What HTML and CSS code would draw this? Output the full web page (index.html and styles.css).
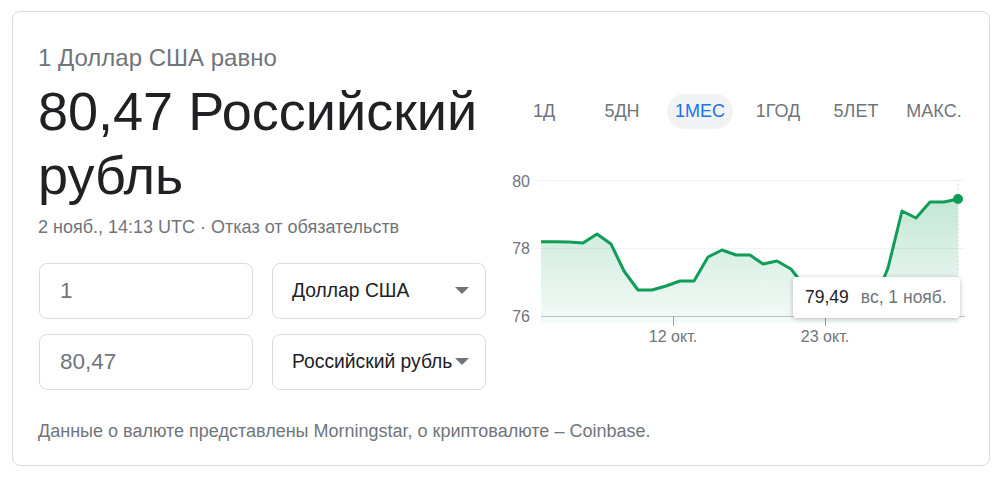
FILE: index.html
```html
<!DOCTYPE html>
<html lang="ru">
<head>
<meta charset="utf-8">
<link rel="stylesheet" href="styles.css">
</head>
<body>
<div class="card">
  <div class="left">
    <div class="eq">1 Доллар США равно</div>
    <div class="big">80,47 Российский<br>рубль</div>
    <div class="date">2 нояб., 14:13 UTC · <span>Отказ от обязательств</span></div>
    <div class="form">
      <div class="field num">1</div>
      <div class="field sel"><span>Доллар США</span><i class="arrow"></i></div>
      <div class="field num">80,47</div>
      <div class="field sel"><span>Российский рубль</span><i class="arrow"></i></div>
    </div>
    <div class="src">Данные о валюте представлены Morningstar, о криптовалюте – Coinbase.</div>
  </div>
  <div class="right">
    <div class="tabs">
      <div class="tab"><span>1Д</span></div>
      <div class="tab"><span>5ДН</span></div>
      <div class="tab"><span class="active">1МЕС</span></div>
      <div class="tab"><span>1ГОД</span></div>
      <div class="tab"><span>5ЛЕТ</span></div>
      <div class="tab"><span>МАКС.</span></div>
    </div>
    <div class="chart">
      <svg width="484" height="185" viewBox="505 165 484 185" xmlns="http://www.w3.org/2000/svg">
        <defs>
          <linearGradient id="g" x1="0" y1="180" x2="0" y2="323" gradientUnits="userSpaceOnUse">
            <stop offset="0" stop-color="#0f9d58" stop-opacity="0.28"/>
            <stop offset="1" stop-color="#0f9d58" stop-opacity="0.04"/>
          </linearGradient>
        </defs>
        <line x1="535" y1="180.5" x2="965" y2="180.5" stroke="#f1f3f4" stroke-width="1"/>
        <line x1="535" y1="248.5" x2="965" y2="248.5" stroke="#f1f3f4" stroke-width="1"/>
        <polygon fill="url(#g)" points="541,241.7 555,241.7 569,242 583,243 597,234 611,244 624,271 638,290 652,290 666,286 680,281 694,281 708,257 722,250 736,255 750,255 763,264 777,261 791,269 805,287 819,294 833,296 847,298 861,300 875,300 888,268 902,211 916,218 930,202 944,202 958,199 958,323 541,323"/>
        <line x1="958" y1="180" x2="958" y2="316" stroke="#dadce0" stroke-width="1" stroke-dasharray="2,2"/>
        <line x1="541" y1="316.5" x2="965" y2="316.5" stroke="#bdc1c6" stroke-width="1"/>
        <line x1="673.5" y1="316" x2="673.5" y2="326" stroke="#9aa0a6" stroke-width="1"/>
        <line x1="825.5" y1="316" x2="825.5" y2="326" stroke="#9aa0a6" stroke-width="1"/>
        <polyline fill="none" stroke="#0f9d58" stroke-width="3" stroke-linejoin="round" points="541,241.7 555,241.7 569,242 583,243 597,234 611,244 624,271 638,290 652,290 666,286 680,281 694,281 708,257 722,250 736,255 750,255 763,264 777,261 791,269 805,287 819,294 833,296 847,298 861,300 875,300 888,268 902,211 916,218 930,202 944,202 958,199"/>
        <circle cx="958" cy="199" r="5" fill="#0f9d58"/>
        <g class="ax">
          <text x="530" y="187" text-anchor="end">80</text>
          <text x="530" y="254" text-anchor="end">78</text>
          <text x="530" y="322" text-anchor="end">76</text>
          <text x="673" y="342" text-anchor="middle">12 окт.</text>
          <text x="825" y="342" text-anchor="middle">23 окт.</text>
        </g>
      </svg>
      <div class="tip"><b>79,49</b><span>вс, 1 нояб.</span></div>
    </div>
  </div>
</div>
</body>
</html>
```
FILE: styles.css
```css
* { box-sizing: border-box; }
body {
  margin: 0;
  background: #fff;
  font-family: "Liberation Sans", Arial, sans-serif;
  color: #202124;
}
.card {
  margin: 11px 12px;
  width: 978px;
  height: 455px;
  border: 1px solid #dadce0;
  border-radius: 8px;
  display: flex;
}
.left {
  width: 492px;
  padding: 32px 0 0 25px;
  display: flex;
  flex-direction: column;
}
.eq {
  font-size: 24px;
  line-height: 28px;
  color: #70757a;
}
.big {
  margin-top: 7px;
  font-size: 54px;
  line-height: 64px;
  color: #202124;
}
.date {
  margin-top: 8.5px;
  font-size: 18px;
  line-height: 22px;
  color: #70757a;
}
.form {
  margin-top: 25px;
  margin-left: 1px;
  display: grid;
  grid-template-columns: 214px 214px;
  grid-auto-rows: 56px;
  column-gap: 19px;
  row-gap: 15px;
}
.field {
  border: 1px solid #dadce0;
  border-radius: 8px;
  display: flex;
  align-items: center;
}
.num {
  padding-left: 20px;
  font-size: 22.5px;
  color: #70757a;
}
.sel {
  padding: 0 16px 0 19px;
  font-size: 19.3px;
  color: #202124;
  justify-content: space-between;
  white-space: nowrap;
}
.arrow {
  width: 0;
  height: 0;
  border-left: 7px solid transparent;
  border-right: 7px solid transparent;
  border-top: 7px solid #70757a;
  flex: none;
}
.src {
  margin-top: 30px;
  font-size: 18px;
  line-height: 22px;
  color: #70757a;
  white-space: nowrap;
}
.right {
  width: 484px;
  padding-top: 82px;
  display: flex;
  flex-direction: column;
}
.tabs {
  display: grid;
  grid-template-columns: repeat(6, 78px);
}
.tab {
  display: flex;
  justify-content: center;
}
.tab span {
  display: block;
  height: 35px;
  line-height: 35px;
  padding: 0 8px;
  border-radius: 18px;
  font-size: 18px;
  color: #70757a;
}
.tab span.active {
  background: #f1f3f4;
  color: #1a73e8;
}
.chart {
  position: relative;
  margin-top: 36px;
  height: 185px;
}
.chart svg { display: block; }
.ax text {
  font-family: "Liberation Sans", Arial, sans-serif;
  font-size: 16px;
  fill: #70757a;
}
.tip {
  position: absolute;
  left: 288px;
  top: 112px;
  width: 167px;
  height: 41px;
  background: #fff;
  border-radius: 4px;
  box-shadow: 0 1px 5px rgba(0,0,0,0.25);
  display: flex;
  align-items: center;
  padding-left: 12px;
  font-size: 17.5px;
  white-space: nowrap;
}
.tip b { font-weight: normal; color: #202124; margin-right: 12px; }
.tip span { color: #70757a; }
```
